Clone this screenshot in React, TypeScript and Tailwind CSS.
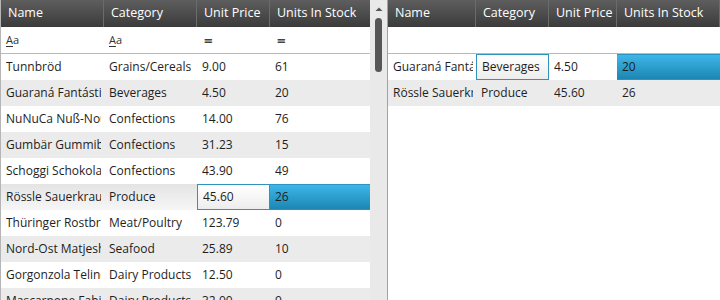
import type { ReactNode } from "react";

type Product = { name: string; category: string; price: string; stock: string };

const leftRows: Product[] = [
  { name: "Tunnbröd", category: "Grains/Cereals", price: "9.00", stock: "61" },
  { name: "Guaraná Fantástica", category: "Beverages", price: "4.50", stock: "20" },
  { name: "NuNuCa Nuß-Nougat-Creme", category: "Confections", price: "14.00", stock: "76" },
  { name: "Gumbär Gummibärchen", category: "Confections", price: "31.23", stock: "15" },
  { name: "Schoggi Schokolade", category: "Confections", price: "43.90", stock: "49" },
  { name: "Rössle Sauerkraut", category: "Produce", price: "45.60", stock: "26" },
  { name: "Thüringer Rostbratwurst", category: "Meat/Poultry", price: "123.79", stock: "0" },
  { name: "Nord-Ost Matjeshering", category: "Seafood", price: "25.89", stock: "10" },
  { name: "Gorgonzola Telino", category: "Dairy Products", price: "12.50", stock: "0" },
  { name: "Mascarpone Fabioli", category: "Dairy Products", price: "32.00", stock: "9" },
];

const rightRows: Product[] = [
  { name: "Guaraná Fantástica", category: "Beverages", price: "4.50", stock: "20" },
  { name: "Rössle Sauerkraut", category: "Produce", price: "45.60", stock: "26" },
];

const leftCols = ["w-[103px]", "w-[93px]", "w-[73px]", "w-[101px]"];
const rightCols = ["w-[88px]", "w-[73px]", "w-[68px]", "w-[103px]"];

const headers = ["Name", "Category", "Unit Price", "Units In Stock"];

function HeaderRow({ cols }: { cols: string[] }) {
  return (
    <div className="flex h-[27px] shrink-0 bg-[linear-gradient(#5e5e5e,#3b3b3b)] text-[12.5px] text-white">
      {headers.map((h, i) => (
        <div
          key={h}
          className={`${cols[i]} flex shrink-0 items-center overflow-hidden border-r border-r-[#6b6b6b] pl-[7px] whitespace-nowrap`}
        >
          {h}
        </div>
      ))}
      <div className="flex-1" />
    </div>
  );
}

function Cell({ w, cls = "", children }: { w: string; cls?: string; children: ReactNode }) {
  return (
    <div className={`${w} flex shrink-0 items-center overflow-hidden whitespace-nowrap pl-[5px] pr-[3px] ${cls}`}>
      <span className="overflow-hidden">{children}</span>
    </div>
  );
}

function DataRow({
  row,
  cols,
  grey,
  current,
  selected,
}: {
  row: Product;
  cols: string[];
  grey: boolean;
  current?: number;
  selected?: boolean;
}) {
  const bg = selected
    ? "bg-[linear-gradient(#e4e4e4,#f6f6f6)]"
    : grey
      ? "bg-[#ebebeb]"
      : "bg-white";
  const values = [row.name, row.category, row.price, row.stock];
  return (
    <div className={`flex h-[26px] shrink-0 ${bg}`}>
      {values.map((v, i) => {
        let cls = "";
        if (current !== undefined && i === current)
          cls = "border border-[#2f93bb] bg-[linear-gradient(#ffffff,#ededed)] pl-[4px]";
        if (current !== undefined && i === 3)
          cls = "bg-[linear-gradient(#3db7e8,#1c86b4)] border-y border-[#2a95c2]";
        return (
          <Cell key={i} w={cols[i]} cls={cls}>
            {v}
          </Cell>
        );
      })}
    </div>
  );
}

function FilterRow({ cols, empty }: { cols: string[]; empty?: boolean }) {
  return (
    <div className="flex h-[27px] shrink-0 border-b border-b-[#b9b9b9] bg-white">
      {!empty &&
        ["Aa", "Aa", "=", "="].map((f, i) => (
          <div key={i} className={`${cols[i]} flex shrink-0 items-center pl-[5px] text-[12px]`}>
            {f === "Aa" ? (
              <span className="text-[11px] text-[#333]">
                <span className="underline underline-offset-2">A</span>a
              </span>
            ) : (
              <span className="pl-[2px] text-[15px] font-bold leading-none text-[#444]">=</span>
            )}
          </div>
        ))}
    </div>
  );
}

function ScrollBar() {
  return (
    <div className="flex h-[300px] w-[18px] shrink-0 flex-col items-center border-r border-r-[#a3a3a3] bg-[#e9e9e9]">
      <svg width="10" height="10" viewBox="0 0 10 10" className="mt-[4px]">
        <path d="M1.5 7 L5 3.5 L8.5 7 Z" fill="#555" />
      </svg>
      <div className="mt-[4px] h-[54px] w-[7px] rounded-full bg-[#565656]" />
    </div>
  );
}

export default function App() {
  return (
    <div className="flex h-[300px] w-[720px] overflow-hidden bg-white font-['Open_Sans','Noto_Sans',sans-serif] text-[12px] text-[#1e1e1e]">
      <div className="flex w-[370px] shrink-0 flex-col border-l border-l-[#b5b5b5]">
        <HeaderRow cols={leftCols} />
        <FilterRow cols={leftCols} />
        {leftRows.map((r, i) => (
          <DataRow
            key={r.name}
            row={r}
            cols={leftCols}
            grey={i % 2 === 1}
            current={i === 5 ? 2 : undefined}
            selected={i === 5}
          />
        ))}
      </div>
      <ScrollBar />
      <div className="flex min-w-0 flex-1 flex-col">
        <HeaderRow cols={rightCols} />
        <FilterRow cols={rightCols} empty />
        {rightRows.map((r, i) => (
          <DataRow
            key={r.name}
            row={r}
            cols={rightCols}
            grey={i % 2 === 1}
            current={i === 0 ? 1 : undefined}
          />
        ))}
      </div>
    </div>
  );
}
